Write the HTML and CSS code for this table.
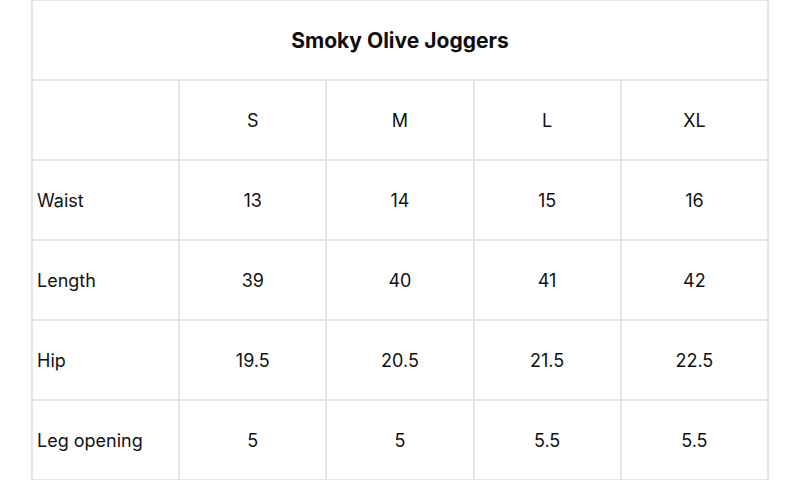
FILE: index.html
```html
<!DOCTYPE html>
<html>
<head>
<meta charset="utf-8">
<link rel="stylesheet" href="styles.css">
</head>
<body>
<table class="chart">
  <tr><th class="title" colspan="5">Smoky Olive Joggers</th></tr>
  <tr><td class="label"></td><td>S</td><td>M</td><td>L</td><td>XL</td></tr>
  <tr><td class="label">Waist</td><td>13</td><td>14</td><td>15</td><td>16</td></tr>
  <tr><td class="label">Length</td><td>39</td><td>40</td><td>41</td><td>42</td></tr>
  <tr><td class="label">Hip</td><td>19.5</td><td>20.5</td><td>21.5</td><td>22.5</td></tr>
  <tr><td class="label">Leg opening</td><td>5</td><td>5</td><td>5.5</td><td>5.5</td></tr>
</table>
</body>
</html>
```
FILE: styles.css
```css
html, body {
  margin: 0;
  padding: 0;
  background: #ffffff;
  overflow: hidden;
}
.chart {
  margin-left: 31px;
  margin-top: -1px;
  width: 738px;
  border-collapse: collapse;
  table-layout: fixed;
  font-family: Inter, "Liberation Sans", sans-serif;
  color: #111111;
}
.chart th, .chart td {
  border: 2px solid #e6e6e6;
  height: 78px;
  padding: 0;
  text-align: center;
  vertical-align: middle;
  font-size: 18px;
  font-weight: 400;
}
.chart .title {
  font-size: 21px;
  font-weight: 700;
  color: #0d0d0d;
}
.chart .label {
  text-align: left;
  padding-left: 4px;
}
```
